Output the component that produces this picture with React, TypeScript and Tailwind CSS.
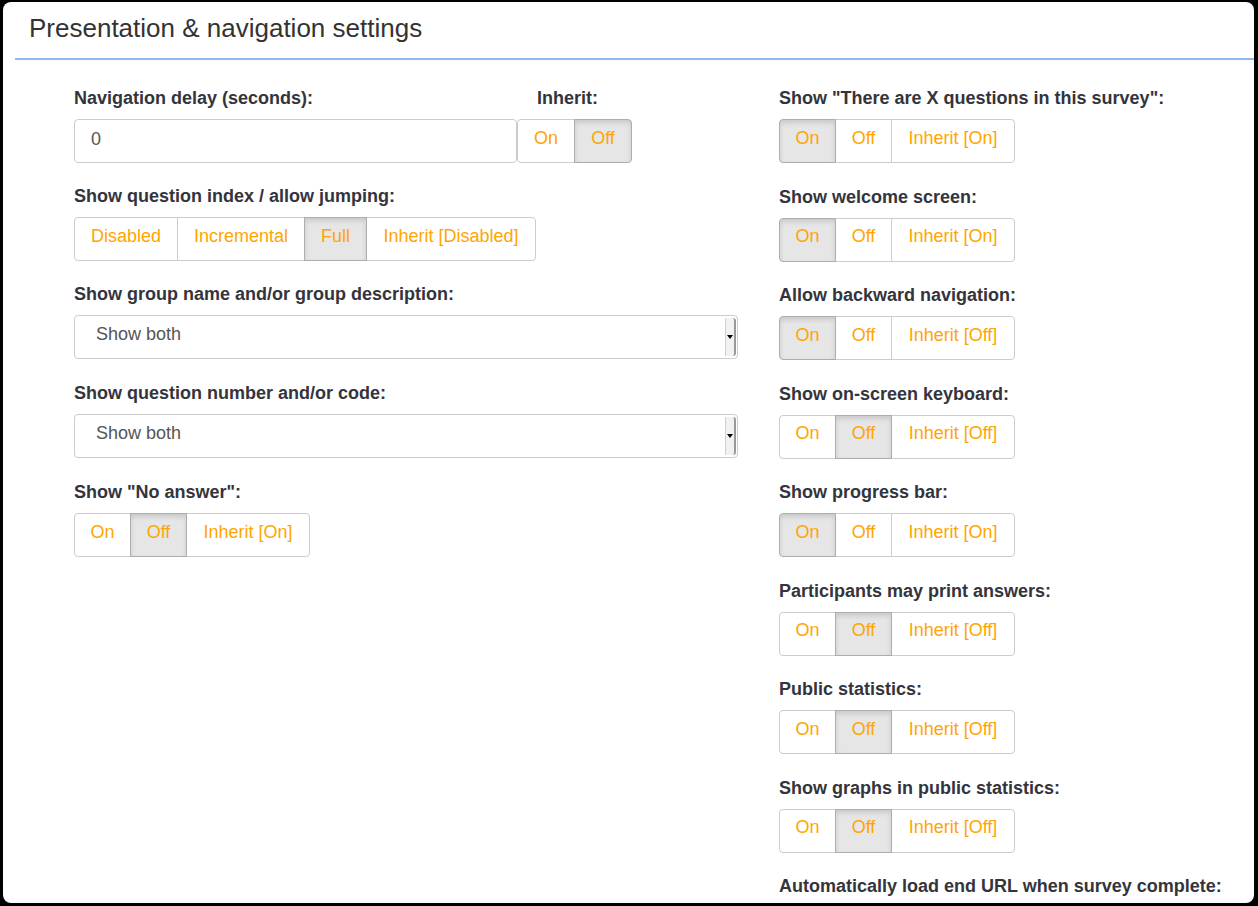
import React from "react";

const font = { fontFamily: '"Liberation Sans", Arial, Helvetica, sans-serif' };

type Opt = { label: string; active?: boolean; w: string };

// grouped toggle buttons
const BtnGroup = ({ opts }: { opts: Opt[] }) => {
  return (
    <div className="flex h-[44px]">
      {opts.map((o, i) => (
        <div
          key={i}
          className={`${o.w} flex items-center justify-center pb-[6px] text-[18px] text-[#ffa500] border -ml-px first:ml-0 first:rounded-l-[4px] last:rounded-r-[4px] ${
            o.active
              ? "bg-[#e6e6e6] border-[#adadad] shadow-[inset_0_3px_5px_rgba(0,0,0,0.125)] z-10"
              : "bg-white border-[#cccccc]"
          }`}
        >
          {o.label}
        </div>
      ))}
    </div>
  );
};

const Label = ({ children }: { children: React.ReactNode }) => (
  <div className="h-[22px] leading-[22px] mb-[10px] text-[18px] font-bold text-[#34343c] whitespace-nowrap">
    {children}
  </div>
);

const Select = ({ value }: { value: string }) => (
  <div className="flex h-[44px] w-[664px] border border-[#cccccc] rounded-[4px] bg-white">
    <div className="flex-1 flex items-center pl-[21px] pb-[5px] text-[18px] text-[#555555]">
      {value}
    </div>
    <div className="w-[11px] my-[2px] mr-[1px] bg-[#f2f2f2] border-l border-[#d0d0d0] border-r-2 border-r-[#999] rounded-r-[3px] flex items-center justify-center">
      <div className="w-0 h-0 border-l-[3px] border-r-[3px] border-t-[4px] border-l-transparent border-r-transparent border-t-black" />
    </div>
  </div>
);

const onOffInherit = (active: number, inherit: string): Opt[] => [
  { label: "On", active: active === 0, w: "w-[57px]" },
  { label: "Off", active: active === 1, w: "w-[57px]" },
  { label: `Inherit [${inherit}]`, w: "w-[124px]" },
];

const rightItems: { label: string; active: number; inherit: string }[] = [
  { label: 'Show "There are X questions in this survey":', active: 0, inherit: "On" },
  { label: "Show welcome screen:", active: 0, inherit: "On" },
  { label: "Allow backward navigation:", active: 0, inherit: "Off" },
  { label: "Show on-screen keyboard:", active: 1, inherit: "Off" },
  { label: "Show progress bar:", active: 0, inherit: "On" },
  { label: "Participants may print answers:", active: 1, inherit: "Off" },
  { label: "Public statistics:", active: 1, inherit: "Off" },
  { label: "Show graphs in public statistics:", active: 1, inherit: "Off" },
];

export default function App() {
  return (
    <div className="w-[1258px] h-[906px] bg-black pt-[2px] pl-[3px] pr-[4px] pb-[3px] overflow-hidden" style={font}>
      <div className="w-full h-full bg-white rounded-[8px] overflow-hidden flex flex-col">
        {/* Header */}
        <div className="h-[58px] shrink-0 ml-[12px] border-b-2 border-[#8fbaf0] flex items-center pl-[14px] pb-[3px]">
          <span className="text-[26px] text-[#333333]">Presentation &amp; navigation settings</span>
        </div>

        {/* Body */}
        <div className="flex pl-[71px] pt-[27px]">
          {/* Left column */}
          <div className="w-[664px] flex flex-col">
            <div className="flex mb-[22px]">
              <div className="w-[443px]">
                <Label>Navigation delay (seconds):</Label>
                <div className="h-[44px] border border-[#cccccc] rounded-[4px] flex items-center pl-[16px] pb-[4px] text-[18px] text-[#555555]">
                  0
                </div>
              </div>
              <div>
                <div className="pl-[20px]">
                  <Label>Inherit:</Label>
                </div>
                <BtnGroup
                  opts={[
                    { label: "On", w: "w-[58px]" },
                    { label: "Off", active: true, w: "w-[58px]" },
                  ]}
                />
              </div>
            </div>

            <div className="mb-[22px]">
              <Label>Show question index / allow jumping:</Label>
              <BtnGroup
                opts={[
                  { label: "Disabled", w: "w-[104px]" },
                  { label: "Incremental", w: "w-[128px]" },
                  { label: "Full", active: true, w: "w-[63px]" },
                  { label: "Inherit [Disabled]", w: "w-[170px]" },
                ]}
              />
            </div>

            <div className="mb-[23px]">
              <Label>Show group name and/or group description:</Label>
              <Select value="Show both" />
            </div>

            <div className="mb-[23px]">
              <Label>Show question number and/or code:</Label>
              <Select value="Show both" />
            </div>

            <div>
              <Label>Show "No answer":</Label>
              <BtnGroup opts={onOffInherit(1, "On")} />
            </div>
          </div>

          {/* Right column */}
          <div className="ml-[41px] flex flex-col">
            {rightItems.map((it, i) => (
              <div key={i} className="mb-[22.5px]">
                <Label>{it.label}</Label>
                <BtnGroup opts={onOffInherit(it.active, it.inherit)} />
              </div>
            ))}
            <Label>Automatically load end URL when survey complete:</Label>
          </div>
        </div>
      </div>
    </div>
  );
}
